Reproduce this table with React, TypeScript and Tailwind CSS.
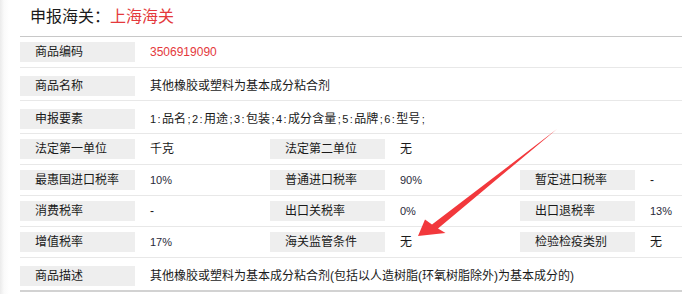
import clsx from "clsx";

type Tone = "text" | "red" | "num" | "spec";

type Cell = {
  label: string;
  value: string;
  tone?: Tone;
};

type Row = {
  cells: Cell[];
  wide?: boolean;
  last?: boolean;
};

const ROWS: Row[] = [
  { cells: [{ label: "商品编码", value: "3506919090", tone: "red" }] },
  {
    wide: true,
    cells: [{ label: "商品名称", value: "其他橡胶或塑料为基本成分粘合剂" }],
  },
  {
    wide: true,
    cells: [
      {
        label: "申报要素",
        value: "1:品名;2:用途;3:包装;4:成分含量;5:品牌;6:型号;",
        tone: "spec",
      },
    ],
  },
  {
    cells: [
      { label: "法定第一单位", value: "千克" },
      { label: "法定第二单位", value: "无" },
    ],
  },
  {
    cells: [
      { label: "最惠国进口税率", value: "10%", tone: "num" },
      { label: "普通进口税率", value: "90%", tone: "num" },
      { label: "暂定进口税率", value: "-" },
    ],
  },
  {
    cells: [
      { label: "消费税率", value: "-" },
      { label: "出口关税率", value: "0%", tone: "num" },
      { label: "出口退税率", value: "13%", tone: "num" },
    ],
  },
  {
    cells: [
      { label: "增值税率", value: "17%", tone: "num" },
      { label: "海关监管条件", value: "无" },
      { label: "检验检疫类别", value: "无" },
    ],
  },
  {
    wide: true,
    last: true,
    cells: [
      {
        label: "商品描述",
        value:
          "其他橡胶或塑料为基本成分粘合剂(包括以人造树脂(环氧树脂除外)为基本成分的)",
      },
    ],
  },
];

const toneClass: Record<Tone, string> = {
  text: "text-[12px] text-[#1a1a1a]",
  spec: "text-[12px] text-[#1a1a1a]",
  red: "text-[12px] text-[#e4393c]",
  num: "text-[11px] text-[#2a2a3a]",
};

// declaration spec list: digits and separators sit on a 6px half-width grid
function SpecText({ text }: { text: string }) {
  return (
    <>
      {Array.from(text).map((ch, i) =>
        /[0-9:;]/.test(ch) ? (
          <span
            key={i}
            className="inline-block w-[6px] text-center text-[11px]"
          >
            {ch}
          </span>
        ) : (
          <span key={i}>{ch}</span>
        ),
      )}
    </>
  );
}

export default function App() {
  return (
    <div className="relative h-[294px] w-full overflow-hidden bg-white bg-[linear-gradient(to_right,#ebebeb,#fafafa_4px,#fff_9px)] font-['Liberation_Sans','Noto_Sans_CJK_SC',sans-serif] text-[12px] text-[#1a1a1a]">
      <div className="pl-5">
        <h2 className="h-[37px] border-b border-[#c8c8c8] pl-[10px] pt-[7px] text-[16px] font-normal leading-[20px] text-[#1a1a1a]">
          申报海关：<span className="text-[#e4393c]">上海海关</span>
        </h2>

        {ROWS.map((row, i) => (
          <div
            key={i}
            className={clsx(
              "flex",
              row.wide && i > 0 ? "pb-[4px] pt-[8px]" : "pb-[5px] pt-[5px]",
              row.last
                ? "border-b-2 border-[#d2d2d2]"
                : "border-b border-[#e8e8e8]",
            )}
          >
            {row.cells.map((cell) => (
              <div key={cell.label} className="flex">
                <div className="h-5 w-[115px] shrink-0 bg-[#eeeeee] pl-[15px] leading-5 text-[#1a1a1a]">
                  {cell.label}
                </div>
                <div
                  className={clsx(
                    "h-5 whitespace-nowrap pl-[15px] leading-5",
                    row.cells.length > 1 && "w-[135px]",
                    toneClass[cell.tone ?? "text"],
                  )}
                >
                  {cell.tone === "spec" ? (
                    <SpecText text={cell.value} />
                  ) : (
                    cell.value
                  )}
                </div>
              </div>
            ))}
          </div>
        ))}
      </div>

      {/* red pointer drawn over the table */}
      <svg
        className="pointer-events-none absolute left-0 top-0"
        width="682"
        height="294"
        viewBox="0 0 682 294"
      >
        <polygon
          points="418,236 425,219.5 432,224.5 557,129 438,228.5 445.5,233"
          fill="#f2383c"
        />
      </svg>
    </div>
  );
}
